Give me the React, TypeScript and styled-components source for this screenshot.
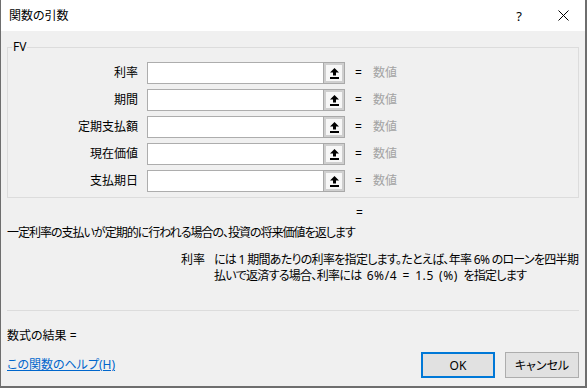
import * as React from 'react';
import styled, { createGlobalStyle } from 'styled-components';

const GlobalStyle = createGlobalStyle`
    html, body {
        margin: 0;
        padding: 0;
    }
    body {
        width: 587px;
        height: 388px;
        overflow: hidden;
        background: #6e6e6e;
        font-family: "Noto Sans", "Noto Sans CJK JP", sans-serif;
    }
`

const Frame = styled.div`
    width: 587px;
    height: 388px;
    box-sizing: border-box;
    padding: 0 2px 2px 1px;
    background: #6e6e6e;
    display: flex;
`

const DialogWindow = styled.div`
    flex: 1;
    min-width: 0;
    display: flex;
    flex-direction: column;
    background: #f0f0f0;
    color: #000;
    font-size: 12px;
    line-height: 16px;
    font-feature-settings: "palt";
    overflow: hidden;
`

const TitleBar = styled.div`
    height: 31px;
    flex: none;
    background: #fff;
    display: flex;
    align-items: center;
    padding-left: 8px;
`

const Title = styled.div`
    flex: 1;
`

const TitleButton = styled.div`
    width: 44px;
    height: 31px;
    display: flex;
    align-items: center;
    justify-content: center;
    font-size: 13px;
`

const Body = styled.div`
    flex: 1;
    min-width: 0;
    display: flex;
    flex-direction: column;
    padding: 0 6px 8px;
`

const Group = styled.fieldset`
    margin: 8px 0 0;
    padding: 7px 0 5px;
    border: 1px solid #dcdcdc;
    display: flex;
    flex-direction: column;
    gap: 5px;
    min-width: 0;
`

const Legend = styled.legend`
    margin-left: 4px;
    padding: 0 1px;
    line-height: 16px;
`

const ArgRow = styled.div`
    display: flex;
    align-items: center;
    height: 22px;
`

const ArgLabel = styled.div`
    width: 130px;
    margin-right: 9px;
    text-align: right;
`

const ArgInput = styled.div`
    width: 176px;
    height: 22px;
    box-sizing: border-box;
    background: #fff;
    border: 1px solid #adadad;
    border-right: none;
`

const RefButton = styled.div`
    width: 22px;
    height: 22px;
    box-sizing: border-box;
    border: 1px solid #a9a9a9;
    box-shadow: inset 0 0 0 2px #cfcfcf;
    background: #f7f7f7;
    display: flex;
    align-items: center;
    justify-content: center;
`

const Eq = styled.div`
    width: 18px;
    margin-left: 10px;
`

const Hint = styled.div<{ $muted?: boolean }>`
    color: ${p => (p.$muted ? '#a3a3a3' : '#000')};
`

const ResultEq = styled.div`
    margin-top: 7px;
    padding-left: 349px;
`

const Description = styled.div`
    margin-top: 4px;
    white-space: nowrap;
    letter-spacing: -1px;
`

const ArgHelp = styled.div`
    margin-top: 11px;
    display: grid;
    grid-template-columns: 198px auto;
    justify-content: start;
    column-gap: 9px;
    letter-spacing: -0.7px;
`

const ArgHelpName = styled.div`
    text-align: right;
    letter-spacing: 0;
`

const ArgHelpText = styled.div`
    white-space: nowrap;
`

const Latin = styled.span`
    letter-spacing: 0.6px;
    word-spacing: 1.5px;
`

const Spacer = styled.div`
    flex: 1;
`

const Separator = styled.div`
    height: 1px;
    background: #dcdcdc;
`

const FormulaResult = styled.div`
    margin-top: 17px;
`

const Footer = styled.div`
    margin-top: 8px;
    display: flex;
    align-items: center;
    gap: 10px;
`

const HelpLink = styled.a`
    flex: 1;
    color: #0066cc;
    text-decoration: underline;
`

const DialogButton = styled.button<{ $primary?: boolean }>`
    width: 74px;
    height: 26px;
    flex: none;
    box-sizing: border-box;
    border: ${p => (p.$primary ? '2px solid #0078d7' : '1px solid #adadad')};
    background: #e1e1e1;
    font-family: inherit;
    font-size: 12px;
    font-feature-settings: "palt";
    color: #000;
    padding: 0;
`

function UpArrow() {
    return (
        <svg width="9" height="11" viewBox="0 0 9 11">
            <polygon points="4.5,0 9,4.5 6,4.5 6,7.5 3,7.5 3,4.5 0,4.5" fill="#000" />
            <rect x="0" y="9" width="9" height="2" fill="#000" />
        </svg>
    )
}

const args = ['利率', '期間', '定期支払額', '現在価値', '支払期日']

function App() {
    return (
        <>
            <GlobalStyle />
            <Frame>
                <DialogWindow>
                    <TitleBar>
                        <Title>関数の引数</Title>
                        <TitleButton>?</TitleButton>
                        <TitleButton>
                            <svg width="11" height="11" viewBox="0 0 11 11">
                                <path d="M0.5 0.5 L10.5 10.5 M10.5 0.5 L0.5 10.5" stroke="#000" strokeWidth="1" />
                            </svg>
                        </TitleButton>
                    </TitleBar>
                    <Body>
                        <Group>
                            <Legend>FV</Legend>
                            {args.map(a => (
                                <ArgRow key={a}>
                                    <ArgLabel>{a}</ArgLabel>
                                    <ArgInput />
                                    <RefButton><UpArrow /></RefButton>
                                    <Eq>=</Eq>
                                    <Hint $muted>数値</Hint>
                                </ArgRow>
                            ))}
                        </Group>
                        <ResultEq>=</ResultEq>
                        <Description>一定利率の支払いが定期的に行われる場合の、投資の将来価値を返します</Description>
                        <ArgHelp>
                            <ArgHelpName>利率</ArgHelpName>
                            <ArgHelpText>
                                には 1 期間あたりの利率を指定します。たとえば、年率 6% のローンを四半期<br />
                                払いで返済する場合、利率には<Latin> 6%/4 = 1.5 (%) </Latin>を指定します
                            </ArgHelpText>
                        </ArgHelp>
                        <Spacer />
                        <Separator />
                        <FormulaResult>数式の結果 =</FormulaResult>
                        <Footer>
                            <HelpLink href="#">この関数のヘルプ(H)</HelpLink>
                            <DialogButton $primary>OK</DialogButton>
                            <DialogButton>キャンセル</DialogButton>
                        </Footer>
                    </Body>
                </DialogWindow>
            </Frame>
        </>
    )
}

export default App;
